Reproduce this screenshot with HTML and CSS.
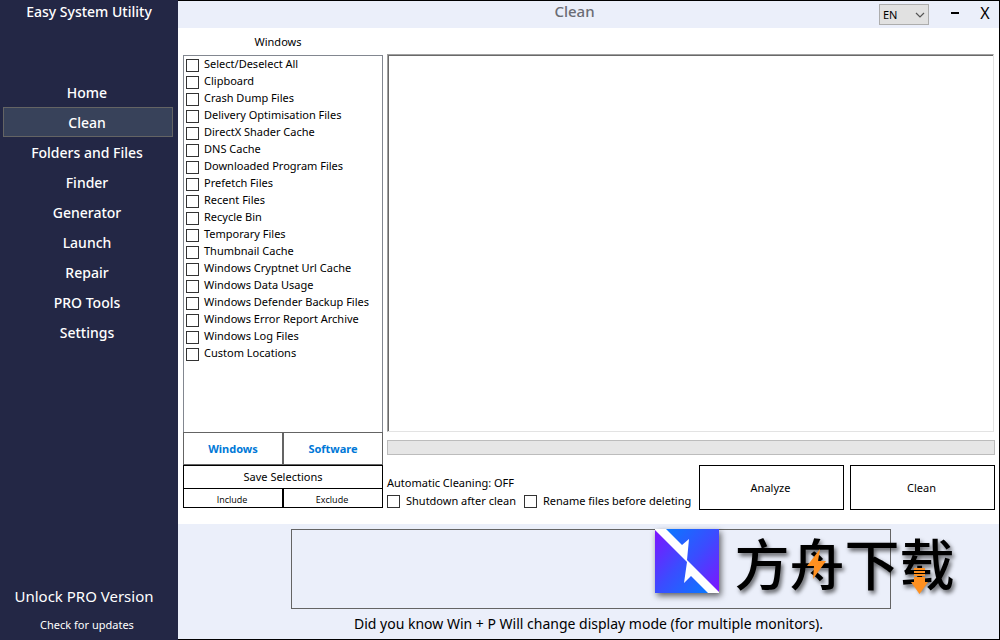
FILE: index.html
```html
<!DOCTYPE html>
<html lang="en">
<head>
    <meta charset="UTF-8">
    <meta name="viewport" content="width=device-width, initial-scale=1.0">
    <title>Easy System Utility</title>
    <link rel="stylesheet" href="styles.css">
</head>
<body>
    <div class="app">
        <!-- Sidebar -->
        <aside class="sidebar">
            <h1 class="app-title">Easy System Utility</h1>
            <nav class="menu">
                <button type="button">Home</button>
                <button type="button" class="active">Clean</button>
                <button type="button">Folders and Files</button>
                <button type="button">Finder</button>
                <button type="button">Generator</button>
                <button type="button">Launch</button>
                <button type="button">Repair</button>
                <button type="button">PRO Tools</button>
                <button type="button">Settings</button>
            </nav>
            <div class="sidebar-bottom">
                <a href="#" class="unlock">Unlock PRO Version</a>
                <a href="#" class="updates">Check for updates</a>
            </div>
        </aside>

        <div class="window">
            <!-- Title bar -->
            <header class="titlebar">
                <h2>Clean</h2>
                <div class="window-controls">
                    <div class="language">
                        <select aria-label="Language">
                            <option>EN</option>
                        </select>
                        <svg class="chevron" width="10" height="6" viewBox="0 0 10 6"><path d="M1 1l4 4 4-4" fill="none" stroke="#555" stroke-width="1.2"/></svg>
                    </div>
                    <button type="button" class="control" aria-label="Minimize"><svg width="8" height="2" viewBox="0 0 8 2"><path d="M0 0h8v2H0z"/></svg></button>
                    <button type="button" class="control" aria-label="Close">X</button>
                </div>
            </header>

            <main class="content">
                <!-- Left side: what to clean -->
                <section class="selection">
                    <h3>Windows</h3>
                    <div class="check-list">
                        <label class="check"><input type="checkbox">Select/Deselect All</label>
                        <label class="check"><input type="checkbox">Clipboard</label>
                        <label class="check"><input type="checkbox">Crash Dump Files</label>
                        <label class="check"><input type="checkbox">Delivery Optimisation Files</label>
                        <label class="check"><input type="checkbox">DirectX Shader Cache</label>
                        <label class="check"><input type="checkbox">DNS Cache</label>
                        <label class="check"><input type="checkbox">Downloaded Program Files</label>
                        <label class="check"><input type="checkbox">Prefetch Files</label>
                        <label class="check"><input type="checkbox">Recent Files</label>
                        <label class="check"><input type="checkbox">Recycle Bin</label>
                        <label class="check"><input type="checkbox">Temporary Files</label>
                        <label class="check"><input type="checkbox">Thumbnail Cache</label>
                        <label class="check"><input type="checkbox">Windows Cryptnet Url Cache</label>
                        <label class="check"><input type="checkbox">Windows Data Usage</label>
                        <label class="check"><input type="checkbox">Windows Defender Backup Files</label>
                        <label class="check"><input type="checkbox">Windows Error Report Archive</label>
                        <label class="check"><input type="checkbox">Windows Log Files</label>
                        <label class="check"><input type="checkbox">Custom Locations</label>
                    </div>
                    <div class="tabs">
                        <button type="button">Windows</button>
                        <button type="button">Software</button>
                    </div>
                    <button type="button" class="save">Save Selections</button>
                    <div class="rules">
                        <button type="button">Include</button>
                        <button type="button">Exclude</button>
                    </div>
                </section>

                <!-- Right side: log and actions -->
                <section class="results">
                    <textarea class="log" aria-label="Cleaning log" readonly></textarea>
                    <progress class="bar" value="0" max="100" aria-label="Progress"></progress>
                    <div class="actions">
                        <div class="options">
                            <p>Automatic Cleaning: OFF</p>
                            <div class="option-row">
                                <label class="check"><input type="checkbox">Shutdown after clean</label>
                                <label class="check"><input type="checkbox">Rename files before deleting</label>
                            </div>
                        </div>
                        <button type="button" class="action-btn">Analyze</button>
                        <button type="button" class="action-btn">Clean</button>
                    </div>
                </section>
            </main>

            <!-- Banner and tip -->
            <footer class="footer">
                <div class="banner">
                    <div class="brand">
                        <svg class="brand-logo" width="64" height="64" viewBox="0 0 64 64">
                            <defs>
                                <linearGradient id="upper" x1="0" y1="0" x2="1" y2="1">
                                    <stop offset="0" stop-color="#0a78ff"/>
                                    <stop offset="0.5" stop-color="#3b4cff"/>
                                    <stop offset="1" stop-color="#7f14ff"/>
                                </linearGradient>
                                <linearGradient id="lower" x1="0" y1="0" x2="1" y2="1">
                                    <stop offset="0" stop-color="#7f14ff"/>
                                    <stop offset="0.5" stop-color="#3b4cff"/>
                                    <stop offset="1" stop-color="#0a78ff"/>
                                </linearGradient>
                            </defs>
                            <path d="M0 0h64v64H0z" fill="#fff"/>
                            <path d="M11 0H64V63L32 31 34 10 27 16z" fill="url(#upper)"/>
                            <path d="M0 1L32 33 29 54 36 47 53 64H0z" fill="url(#lower)"/>
                        </svg>
                        <div class="brand-name">
                            <span lang="zh-CN">方舟下载</span>
                            <svg class="bolt" width="19" height="30" viewBox="0 0 19 30"><path d="M13 0L0 17h7L6 30 19 12h-8z" fill="#ff9020"/></svg>
                            <svg class="arrow" width="17" height="26" viewBox="0 0 17 26"><path d="M3 0h11v2H3zM3 3h11v2H3zM3 6h11v2H3zM3 9h11v5h3L8.500 26 0 14h3z" fill="#ff9020"/></svg>
                        </div>
                    </div>
                </div>
                <p class="tip">Did you know Win + P Will change display mode (for multiple monitors).</p>
            </footer>
        </div>
    </div>
</body>
</html>
```

FILE: styles.css
```css
/* Reset styles */
* {
    margin: 0;
    padding: 0;
    box-sizing: border-box;
}

body {
    font-family: "Noto Sans", "Open Sans", sans-serif;
    font-size: 11px;
    line-height: 16px;
    color: #000;
}

button,
select,
textarea {
    font: inherit;
    color: inherit;
    background: #fff;
    border: 1px solid #000;
    border-radius: 0;
}

.app {
    display: flex;
    min-height: 100vh;
}

/* Sidebar */
.sidebar {
    width: 178px;
    flex-shrink: 0;
    display: flex;
    flex-direction: column;
    padding: 2px 5px 5px 3px;
    background-color: #232745;
    color: #fff;
    text-align: center;
}

.app-title {
    padding-left: 2px;
    font-size: 14px;
    font-weight: 500;
    line-height: 20px;
    margin-bottom: 55px;
}

.menu {
    display: flex;
    flex-direction: column;
}

.menu button {
    height: 30px;
    padding-right: 2px;
    font-size: 14px;
    font-weight: 500;
    line-height: 17px;
    background: none;
    border: 1px solid transparent;
}

.menu button.active {
    background-color: #38425a;
    border-color: #646464;
}

.sidebar-bottom {
    margin-top: auto;
    display: flex;
    flex-direction: column;
    gap: 9px;
}

.sidebar-bottom a {
    color: #fff;
    text-decoration: none;
}

.unlock {
    font-size: 15px;
    line-height: 20px;
    padding-right: 8px;
}

.updates {
    line-height: 20px;
    padding-right: 2px;
}

/* Window */
.window {
    flex: 1;
    min-width: 0;
    display: flex;
    flex-direction: column;
    border: 1px solid #000;
    border-left: none;
    background-color: #fff;
}

.titlebar {
    display: grid;
    grid-template-columns: 1fr auto 1fr;
    height: 27px;
    padding-right: 4px;
    background-color: #ebeffa;
}

.titlebar h2 {
    grid-column: 2;
    padding-right: 24px;
    font-size: 15px;
    font-weight: 500;
    line-height: 20px;
    color: #6a6c74;
}

.window-controls {
    display: flex;
    justify-content: flex-end;
    align-items: flex-start;
}

.language {
    position: relative;
    margin: 3px 16px 0 0;
}

.language select {
    display: block;
    width: 50px;
    height: 21px;
    padding-left: 3px;
    appearance: none;
    background-color: #e1e1e1;
    border-color: #adadad;
}

.chevron {
    position: absolute;
    top: 8px;
    right: 4px;
    pointer-events: none;
}

.control {
    display: flex;
    align-items: center;
    justify-content: center;
    width: 20px;
    height: 23px;
    font-size: 16px;
    background: none;
    border: none;
}

.control + .control {
    margin-left: 10px;
}

/* Content */
.content {
    flex: 1;
    display: grid;
    grid-template-columns: 200px 1fr;
    gap: 4px;
    padding: 0 4px 14px 5px;
}

.selection {
    display: flex;
    flex-direction: column;
    padding-bottom: 2px;
}

.selection h3 {
    height: 27px;
    padding-right: 10px;
    font-size: 11px;
    font-weight: 400;
    line-height: 28px;
    text-align: center;
}

.check {
    display: flex;
    align-items: center;
    gap: 5px;
}

.check input {
    width: 13px;
    height: 13px;
    appearance: none;
    background-color: #fff;
    border: 1px solid #333;
}

.check input:checked {
    background-color: #0078d7;
}

.check-list {
    flex: 1;
    display: flex;
    flex-direction: column;
    gap: 1px;
    padding: 0 2px;
    border: 1px solid #828790;
    border-bottom: none;
}

.check-list .check input {
    margin-top: 3px;
}

.tabs,
.rules {
    display: grid;
    grid-template-columns: 1fr 1fr;
}

.tabs button {
    height: 33px;
    font-weight: 700;
    color: #0078d7;
    border-color: #646464;
}

.save {
    height: 24px;
}

.rules button {
    height: 19px;
    padding: 3px 2px 0 0;
    font-family: "Open Sans", sans-serif;
    font-size: 9px;
    border-top: none;
}

.results {
    display: flex;
    flex-direction: column;
    padding-top: 26px;
}

.log {
    flex: 1;
    margin-right: 1px;
    resize: none;
    outline: none;
    border: 1px solid #e3e3e3;
    border-top-color: #a0a0a0;
    border-left-color: #a0a0a0;
    box-shadow: inset 1px 1px #696969;
}

.bar {
    display: block;
    width: 100%;
    height: 15px;
    margin: 8px 0 10px;
    appearance: none;
    background-color: #e6e6e6;
    border: 1px solid #bcbcbc;
}

.bar::-webkit-progress-bar {
    background-color: #e6e6e6;
}

.bar::-webkit-progress-value {
    background-color: #06b025;
}

.actions {
    display: flex;
    gap: 6px;
}

.options {
    flex: 1;
    display: flex;
    flex-direction: column;
    gap: 2px;
    padding-top: 10px;
    white-space: nowrap;
}

.option-row {
    display: flex;
    gap: 8px;
}

.option-row .check {
    gap: 6px;
}

.action-btn {
    width: 145px;
    height: 45px;
    padding-right: 2px;
}

/* Footer */
.footer {
    height: 115px;
    padding-top: 5px;
    background-color: #ebeffa;
}

.banner {
    position: relative;
    width: 600px;
    height: 80px;
    margin: 0 auto;
    left: 2px;
    border: 1px solid #646464;
}

.brand {
    position: absolute;
    top: -1px;
    left: 363px;
    display: flex;
    gap: 16px;
}

.brand-logo {
    filter: drop-shadow(2px 3px 3px rgba(0, 0, 0, 0.6));
}

.brand-name {
    position: relative;
    font-family: "Noto Sans CJK SC", sans-serif;
    font-size: 55px;
    font-weight: 500;
    line-height: 64px;
    white-space: nowrap;
    text-shadow: 2px 3px 4px rgba(0, 0, 0, 0.6);
}

.bolt {
    position: absolute;
    top: 20px;
    left: 72px;
}

.arrow {
    position: absolute;
    top: 39px;
    left: 176px;
}

.tip {
    font-size: 14px;
    line-height: 30px;
    text-align: center;
}
```
